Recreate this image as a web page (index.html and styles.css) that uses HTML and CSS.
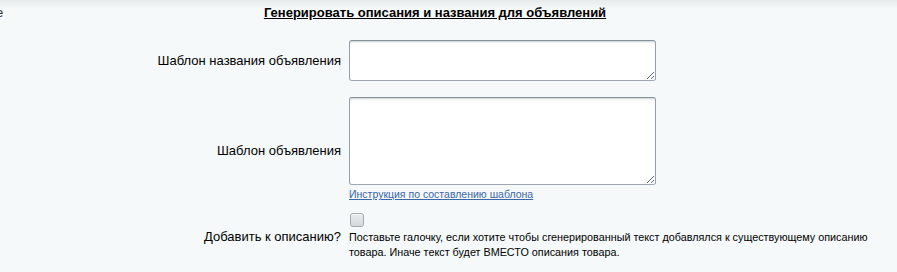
FILE: index.html
```html
<!DOCTYPE html>
<html lang="ru">
<head>
    <meta charset="UTF-8">
    <title>Генерировать описания и названия для объявлений</title>
    <link rel="stylesheet" href="styles.css">
</head>
<body>
    <div class="page">
        <div class="heading">
            <span class="tab-stub">е</span>
            <span class="heading-title">Генерировать описания и названия для объявлений</span>
        </div>
        <div class="edit-table">
            <label class="cell-l" for="tpl-name">Шаблон названия объявления</label>
            <div class="cell-r">
                <textarea id="tpl-name" class="field field-short"></textarea>
            </div>

            <label class="cell-l" for="tpl-text">Шаблон объявления</label>
            <div class="cell-r">
                <textarea id="tpl-text" class="field field-tall"></textarea>
                <a class="hint-link" href="#">Инструкция по составлению шаблона</a>
            </div>

            <label class="cell-l" for="append">Добавить к описанию?</label>
            <div class="cell-r">
                <input type="checkbox" id="append" class="check">
                <div class="hint">Поставьте галочку, если хотите чтобы сгенерированный текст добавлялся к существующему описанию товара. Иначе текст будет ВМЕСТО описания товара.</div>
            </div>
        </div>
    </div>
</body>
</html>
```

FILE: styles.css
```css
body {
    margin: 0;
    min-height: 100vh;
    font-family: "Liberation Sans", Arial, sans-serif;
    font-size: 13px;
    color: #000;
    background: linear-gradient(to bottom, #e6eaeb 0, #f5f9f9 9px) #f5f9f9;
    overflow: hidden;
}
.page {
    width: 870px;
}
.heading {
    display: grid;
    padding-top: 5px;
    line-height: 16px;
}
.tab-stub,
.heading-title {
    grid-area: 1 / 1;
}
.tab-stub {
    justify-self: start;
    margin-left: -4px;
    color: #333;
}
.heading-title {
    justify-self: center;
    font-weight: bold;
    text-decoration: underline;
    color: #000;
}
.edit-table {
    display: grid;
    grid-template-columns: 341px 1fr;
    column-gap: 8px;
    margin-top: 19px;
    align-items: center;
}
.cell-l {
    text-align: right;
    line-height: 16px;
}
.cell-r {
    display: flex;
    flex-direction: column;
    align-items: flex-start;
}
.edit-table > :nth-child(3),
.edit-table > :nth-child(4) {
    margin-top: 16px;
}
.edit-table > :nth-child(5),
.edit-table > :nth-child(6) {
    margin-top: 12px;
}
.edit-table > :nth-child(3) {
    padding-top: 3px;
}
.field {
    box-sizing: border-box;
    width: 307px;
    margin: 0;
    padding: 3px 5px;
    border: 1px solid;
    border-color: #87919c #959ea9 #9ea7b1 #959ea9;
    border-radius: 3px;
    background: #fff;
    box-shadow: inset 0 2px 2px -1px rgba(180,188,191,0.7);
    font-family: inherit;
    font-size: 13px;
    display: block;
}
.field-short { height: 41px; }
.field-tall { height: 88px; }
.hint-link {
    margin-top: 2px;
    font-size: 10.5px;
    line-height: 14px;
    color: #3a66a8;
}
.check {
    appearance: none;
    -webkit-appearance: none;
    box-sizing: border-box;
    width: 14px;
    height: 14px;
    margin: 0 0 3px 1px;
    border: 1px solid #a4a9ad;
    border-radius: 3px;
    background: linear-gradient(to bottom, #e9ebec, #d6d9db);
    box-shadow: inset 0 1px 0 rgba(255,255,255,0.6);
}
.hint {
    width: 535px;
    font-size: 10.8px;
    line-height: 15px;
    color: #000;
}
```
